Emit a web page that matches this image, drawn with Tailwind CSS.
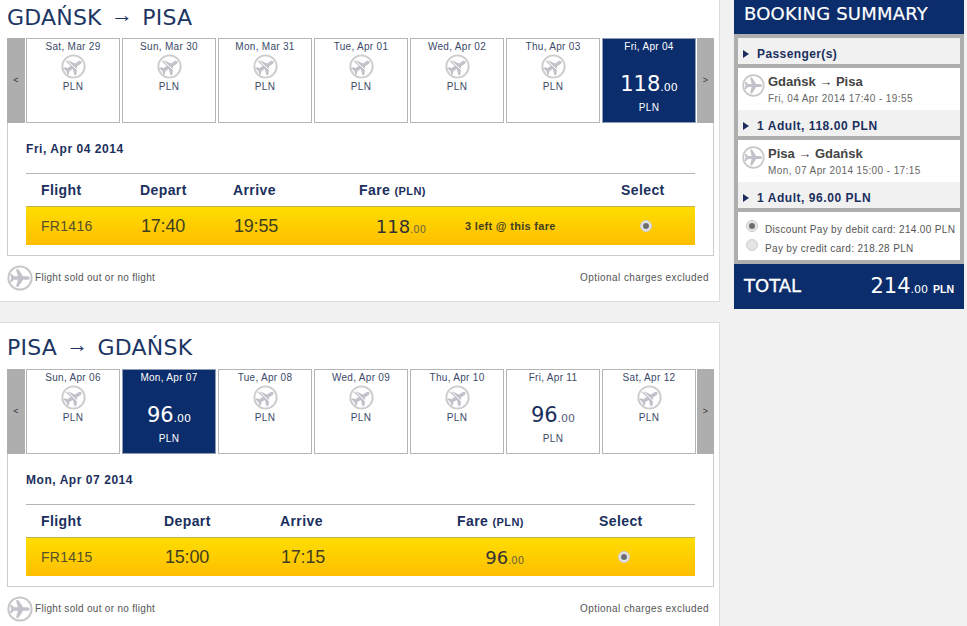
<!DOCTYPE html>
<html lang="en">
<head>
    <meta charset="UTF-8">
    <title>Select flights</title>
    <script src="https://cdn.jsdelivr.net/npm/@tailwindcss/browser@4"></script>
</head>
<body class="bg-[#f1f1f1] h-[626px] overflow-hidden font-['Liberation_Sans',Arial,sans-serif] text-[#1b2f5e]">

    <svg class="hidden">
        <symbol id="noflight" viewBox="0 0 26 26">
            <circle cx="13" cy="13" r="11.6" fill="#fff" stroke="#cdcdcd" stroke-width="2"/>
            <path transform="translate(13 13) rotate(-32) scale(1.02)" fill="#c2c2ca" d="M9.5 0C9.5-1 8.5-1.8 7-1.8L3-1.8-1.5-8.5-4-8.5-2-1.8-6-1.8-8-4-9.8-4-8.6 0-9.8 4-8 4-6 1.8-2 1.8-4 8.5-1.5 8.5 3 1.8 7 1.8C8.5 1.8 9.5 1 9.5 0Z"/>
            <path d="M5.5 6L20.5 20" stroke="#fff" stroke-width="1"/>
        </symbol>
        <symbol id="flight" viewBox="0 0 26 26">
            <circle cx="13" cy="13" r="11.6" fill="#fff" stroke="#c8c8c8" stroke-width="2"/>
            <path transform="translate(13 13) scale(1.02)" fill="#c2c2ca" d="M9.5 0C9.5-1 8.5-1.8 7-1.8L3-1.8-1.5-8.5-4-8.5-2-1.8-6-1.8-8-4-9.8-4-8.6 0-9.8 4-8 4-6 1.8-2 1.8-4 8.5-1.5 8.5 3 1.8 7 1.8C8.5 1.8 9.5 1 9.5 0Z"/>
        </symbol>
    </svg>

    <div class="flex items-start">
        <div class="w-[720px] flex flex-col gap-[20px]">

            <!-- Outbound -->
            <section class="bg-white border-r border-b border-[#dcdcdc]">
                <h2 class="h-[38px] pl-[7px] pt-[4px] text-[22px] leading-[28px] tracking-[.2px] font-['DejaVu_Sans',sans-serif] text-[#1c3563]">GDAŃSK <span class="inline-block -translate-y-[3px] font-['Liberation_Sans',sans-serif] mx-[2px]">→</span> PISA</h2>
                <div class="ml-[7px] mr-[5px] flex gap-px h-[85px]">
                    <div class="w-[18px] bg-[#aeaeae] flex items-center justify-center text-[9px] text-[#333]">&lt;</div>
                    <div class="flex gap-[2px]">
                        <div class="w-[94px] bg-white border border-[#b5b5b5] flex flex-col items-center text-[10px] tracking-[.3px] text-[#3b4a68]"><span class="mt-[2px] leading-[12px]">Sat, Mar 29</span><svg class="w-[25px] h-[25px] mt-[1px]"><use href="#noflight"/></svg><span class="mt-px leading-[14px]">PLN</span></div>
                        <div class="w-[94px] bg-white border border-[#b5b5b5] flex flex-col items-center text-[10px] tracking-[.3px] text-[#3b4a68]"><span class="mt-[2px] leading-[12px]">Sun, Mar 30</span><svg class="w-[25px] h-[25px] mt-[1px]"><use href="#noflight"/></svg><span class="mt-px leading-[14px]">PLN</span></div>
                        <div class="w-[94px] bg-white border border-[#b5b5b5] flex flex-col items-center text-[10px] tracking-[.3px] text-[#3b4a68]"><span class="mt-[2px] leading-[12px]">Mon, Mar 31</span><svg class="w-[25px] h-[25px] mt-[1px]"><use href="#noflight"/></svg><span class="mt-px leading-[14px]">PLN</span></div>
                        <div class="w-[94px] bg-white border border-[#b5b5b5] flex flex-col items-center text-[10px] tracking-[.3px] text-[#3b4a68]"><span class="mt-[2px] leading-[12px]">Tue, Apr 01</span><svg class="w-[25px] h-[25px] mt-[1px]"><use href="#noflight"/></svg><span class="mt-px leading-[14px]">PLN</span></div>
                        <div class="w-[94px] bg-white border border-[#b5b5b5] flex flex-col items-center text-[10px] tracking-[.3px] text-[#3b4a68]"><span class="mt-[2px] leading-[12px]">Wed, Apr 02</span><svg class="w-[25px] h-[25px] mt-[1px]"><use href="#noflight"/></svg><span class="mt-px leading-[14px]">PLN</span></div>
                        <div class="w-[94px] bg-white border border-[#b5b5b5] flex flex-col items-center text-[10px] tracking-[.3px] text-[#3b4a68]"><span class="mt-[2px] leading-[12px]">Thu, Apr 03</span><svg class="w-[25px] h-[25px] mt-[1px]"><use href="#noflight"/></svg><span class="mt-px leading-[14px]">PLN</span></div>
                        <div class="w-[94px] bg-[#0c2d6b] border border-[#8d9cb3] flex flex-col items-center text-[10px] tracking-[.3px] text-white"><span class="mt-[2px] leading-[12px]">Fri, Apr 04</span><span class="mt-[18px] leading-[26px] text-[21px] tracking-normal font-['DejaVu_Sans',sans-serif]">118<span class="text-[11px]">.00</span></span><span class="leading-[14px]">PLN</span></div>
                    </div>
                    <div class="w-[17px] bg-[#aeaeae] flex items-center justify-center text-[9px] text-[#333]">&gt;</div>
                </div>
                <div class="ml-[7px] mr-[5px] h-[133px] border-x border-b border-[#cccccc] px-[18px]">
                    <p class="h-[50px] pt-[18px] text-[12px] leading-[16px] font-bold tracking-[.55px]">Fri, Apr 04 2014</p>
                    <div class="border-t border-[#b5b5b5] grid grid-cols-[114px_93px_126px_67px_195px_74px] h-[33px] items-center text-[14px] font-bold tracking-[.4px]">
                        <span class="pl-[15px]">Flight</span><span>Depart</span><span>Arrive</span><span class="col-span-2 whitespace-nowrap">Fare <span class="text-[11px]">(PLN)</span></span><span>Select</span>
                    </div>
                    <div class="border-t border-[#bdb060] h-[39px] bg-linear-to-b from-[#ffdd00] to-[#ffbe00] grid grid-cols-[114px_93px_126px_67px_195px_74px] items-center text-[#3f3f22]">
                        <span class="pl-[15px] text-[14px] tracking-[.3px] text-[#55502a]">FR1416</span>
                        <span class="pl-px text-[18px] tracking-[-.2px]">17:40</span>
                        <span class="pl-px text-[18px] tracking-[-.2px]">19:55</span>
                        <span class="text-right text-[18px] font-['DejaVu_Sans',sans-serif] text-[#333]">118<span class="text-[10px] text-[#6b6440]">.00</span></span>
                        <span class="pl-[39px] text-[11px] font-bold tracking-[.3px]">3 left @ this fare</span>
                        <div class="pl-[19px]"><div class="w-[12px] h-[12px] rounded-full bg-[#e4e4e4] border border-[#cfcfcf] flex items-center justify-center"><div class="w-[6px] h-[6px] rounded-full bg-[#6e6e6e]"></div></div></div>
                    </div>
                </div>
                <div class="h-[45px] flex items-center pb-[2px] pl-[7px] pr-[10px] text-[10px] tracking-[.3px] text-[#555]">
                    <svg class="w-[26px] h-[26px] mr-[2px]"><use href="#flight"/></svg>
                    <span>Flight sold out or no flight</span>
                    <span class="ml-auto tracking-[.42px]">Optional charges excluded</span>
                </div>
            </section>

            <!-- Return -->
            <section class="bg-white border-t border-r border-[#dcdcdc]">
                <h2 class="h-[46px] pl-[7px] pt-[11px] text-[22px] leading-[28px] tracking-[.2px] font-['DejaVu_Sans',sans-serif] text-[#1c3563]">PISA <span class="inline-block -translate-y-[3px] font-['Liberation_Sans',sans-serif] mx-[2px]">→</span> GDAŃSK</h2>
                <div class="ml-[7px] mr-[5px] flex gap-px h-[85px]">
                    <div class="w-[18px] bg-[#aeaeae] flex items-center justify-center text-[9px] text-[#333]">&lt;</div>
                    <div class="flex gap-[2px]">
                        <div class="w-[94px] bg-white border border-[#b5b5b5] flex flex-col items-center text-[10px] tracking-[.3px] text-[#3b4a68]"><span class="mt-[2px] leading-[12px]">Sun, Apr 06</span><svg class="w-[25px] h-[25px] mt-[1px]"><use href="#noflight"/></svg><span class="mt-px leading-[14px]">PLN</span></div>
                        <div class="w-[94px] bg-[#0c2d6b] border border-[#8d9cb3] flex flex-col items-center text-[10px] tracking-[.3px] text-white"><span class="mt-[2px] leading-[12px]">Mon, Apr 07</span><span class="mt-[18px] leading-[26px] text-[21px] tracking-normal font-['DejaVu_Sans',sans-serif]">96<span class="text-[11px]">.00</span></span><span class="leading-[14px]">PLN</span></div>
                        <div class="w-[94px] bg-white border border-[#b5b5b5] flex flex-col items-center text-[10px] tracking-[.3px] text-[#3b4a68]"><span class="mt-[2px] leading-[12px]">Tue, Apr 08</span><svg class="w-[25px] h-[25px] mt-[1px]"><use href="#noflight"/></svg><span class="mt-px leading-[14px]">PLN</span></div>
                        <div class="w-[94px] bg-white border border-[#b5b5b5] flex flex-col items-center text-[10px] tracking-[.3px] text-[#3b4a68]"><span class="mt-[2px] leading-[12px]">Wed, Apr 09</span><svg class="w-[25px] h-[25px] mt-[1px]"><use href="#noflight"/></svg><span class="mt-px leading-[14px]">PLN</span></div>
                        <div class="w-[94px] bg-white border border-[#b5b5b5] flex flex-col items-center text-[10px] tracking-[.3px] text-[#3b4a68]"><span class="mt-[2px] leading-[12px]">Thu, Apr 10</span><svg class="w-[25px] h-[25px] mt-[1px]"><use href="#noflight"/></svg><span class="mt-px leading-[14px]">PLN</span></div>
                        <div class="w-[94px] bg-white border border-[#b5b5b5] flex flex-col items-center text-[10px] tracking-[.3px] text-[#3b4a68]"><span class="mt-[2px] leading-[12px]">Fri, Apr 11</span><span class="mt-[18px] leading-[26px] text-[21px] tracking-normal font-['DejaVu_Sans',sans-serif] text-[#1b2f5e]">96<span class="text-[11px] text-[#55607a]">.00</span></span><span class="leading-[14px]">PLN</span></div>
                        <div class="w-[94px] bg-white border border-[#b5b5b5] flex flex-col items-center text-[10px] tracking-[.3px] text-[#3b4a68]"><span class="mt-[2px] leading-[12px]">Sat, Apr 12</span><svg class="w-[25px] h-[25px] mt-[1px]"><use href="#noflight"/></svg><span class="mt-px leading-[14px]">PLN</span></div>
                    </div>
                    <div class="w-[17px] bg-[#aeaeae] flex items-center justify-center text-[9px] text-[#333]">&gt;</div>
                </div>
                <div class="ml-[7px] mr-[5px] h-[133px] border-x border-b border-[#cccccc] px-[18px]">
                    <p class="h-[50px] pt-[18px] text-[12px] leading-[16px] font-bold tracking-[.55px]">Mon, Apr 07 2014</p>
                    <div class="border-t border-[#b5b5b5] grid grid-cols-[138px_116px_177px_67px_75px_96px] h-[33px] items-center text-[14px] font-bold tracking-[.4px]">
                        <span class="pl-[15px]">Flight</span><span>Depart</span><span>Arrive</span><span class="whitespace-nowrap">Fare <span class="text-[11px]">(PLN)</span></span><span></span><span>Select</span>
                    </div>
                    <div class="border-t border-[#bdb060] h-[39px] bg-linear-to-b from-[#ffdd00] to-[#ffbe00] grid grid-cols-[138px_116px_177px_67px_75px_96px] items-center text-[#3f3f22]">
                        <span class="pl-[15px] text-[14px] tracking-[.3px] text-[#55502a]">FR1415</span>
                        <span class="pl-px text-[18px] tracking-[-.2px]">15:00</span>
                        <span class="pl-px text-[18px] tracking-[-.2px]">17:15</span>
                        <span class="text-right text-[18px] font-['DejaVu_Sans',sans-serif] text-[#333]">96<span class="text-[10px] text-[#6b6440]">.00</span></span>
                        <span></span>
                        <div class="pl-[19px]"><div class="w-[12px] h-[12px] rounded-full bg-[#e4e4e4] border border-[#cfcfcf] flex items-center justify-center"><div class="w-[6px] h-[6px] rounded-full bg-[#6e6e6e]"></div></div></div>
                    </div>
                </div>
                <div class="h-[45px] flex items-center pb-[2px] pl-[7px] pr-[10px] text-[10px] tracking-[.3px] text-[#555]">
                    <svg class="w-[26px] h-[26px] mr-[2px]"><use href="#flight"/></svg>
                    <span>Flight sold out or no flight</span>
                    <span class="ml-auto tracking-[.42px]">Optional charges excluded</span>
                </div>
            </section>
        </div>

        <!-- Summary -->
        <aside class="ml-[14px] w-[230px]">
            <h2 class="h-[34px] bg-[#0c2d6b] pl-[10px] pt-[1px] text-[18px] leading-[26px] tracking-[.2px] [-webkit-text-stroke:0.2px_white] font-['DejaVu_Sans',sans-serif] text-white">BOOKING SUMMARY</h2>
            <div class="bg-[#aeaeae] p-[4px] flex flex-col gap-[4px]">
                <div class="h-[26px] bg-[#f1f1f1] flex items-center pl-[5px] pt-[6px] text-[12px] font-bold tracking-[.4px]">
                    <span class="w-0 h-0 mr-[8px] border-y-[4px] border-y-transparent border-l-[6px] border-l-[#1b2f5e]"></span>Passenger(s)
                </div>
                <div>
                    <div class="h-[42px] bg-white flex items-start pl-[4px] pt-[6px]">
                        <svg class="w-[23px] h-[23px] mr-[3px] shrink-0"><use href="#flight"/></svg>
                        <div>
                            <p class="pt-px text-[13px] leading-[14px] font-bold text-[#444]">Gdańsk → Pisa</p>
                            <p class="mt-[4px] text-[10px] leading-[12px] tracking-[.4px] text-[#666]">Fri, 04 Apr 2014 17:40 - 19:55</p>
                        </div>
                    </div>
                    <div class="h-[26px] bg-[#f1f1f1] flex items-center pl-[5px] pt-[6px] text-[12px] font-bold tracking-[.55px]">
                        <span class="w-0 h-0 mr-[8px] border-y-[4px] border-y-transparent border-l-[6px] border-l-[#1b2f5e]"></span>1 Adult, 118.00 PLN
                    </div>
                </div>
                <div>
                    <div class="h-[42px] bg-white flex items-start pl-[4px] pt-[6px]">
                        <svg class="w-[23px] h-[23px] mr-[3px] shrink-0"><use href="#flight"/></svg>
                        <div>
                            <p class="pt-px text-[13px] leading-[14px] font-bold text-[#444]">Pisa → Gdańsk</p>
                            <p class="mt-[4px] text-[10px] leading-[12px] tracking-[.4px] text-[#666]">Mon, 07 Apr 2014 15:00 - 17:15</p>
                        </div>
                    </div>
                    <div class="h-[26px] bg-[#f1f1f1] flex items-center pl-[5px] pt-[6px] text-[12px] font-bold tracking-[.55px]">
                        <span class="w-0 h-0 mr-[8px] border-y-[4px] border-y-transparent border-l-[6px] border-l-[#1b2f5e]"></span>1 Adult, 96.00 PLN
                    </div>
                </div>
                <div class="h-[48px] bg-white pt-[7px] pl-[8px] flex flex-col gap-[6px] text-[10px] tracking-[.34px] text-[#555]">
                    <div class="flex items-center h-[13px]"><div class="w-[12px] h-[12px] mr-[7px] rounded-full bg-[#e4e4e4] border border-[#cfcfcf] flex items-center justify-center"><div class="w-[6px] h-[6px] rounded-full bg-[#6e6e6e]"></div></div><span class="pt-[7px]">Discount Pay by debit card: 214.00 PLN</span></div>
                    <div class="flex items-center h-[13px]"><div class="w-[12px] h-[12px] mr-[7px] rounded-full bg-[#e4e4e4] border border-[#cfcfcf]"></div><span class="pt-[7px]">Pay by credit card: 218.28 PLN</span></div>
                </div>
            </div>
            <div class="h-[45px] bg-[#0c2d6b] flex items-center justify-between pl-[10px] pr-[10px] text-white">
                <span class="text-[18px] font-['DejaVu_Sans',sans-serif] [-webkit-text-stroke:0.3px_white] pb-[2px]">TOTAL</span>
                <span class="flex items-baseline font-['DejaVu_Sans',sans-serif]"><span class="text-[21px]">214</span><span class="text-[11px]">.00</span><span class="ml-[5px] text-[10.5px] font-bold font-['Liberation_Sans',sans-serif]">PLN</span></span>
            </div>
        </aside>
    </div>

</body>
</html>
